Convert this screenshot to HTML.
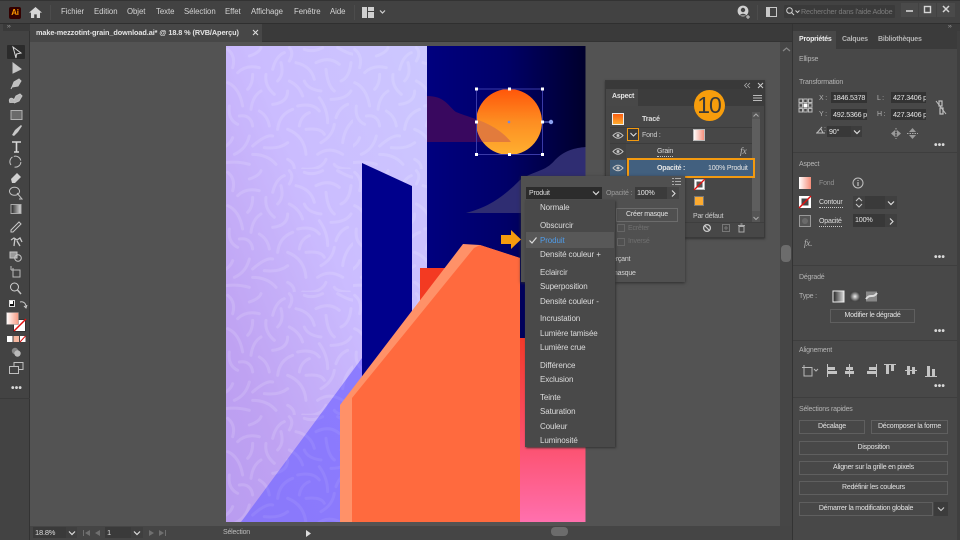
<!DOCTYPE html>
<html lang="fr"><head><meta charset="utf-8"><title>Illustrator</title>
<style>
html,body{margin:0;padding:0;width:960px;height:540px;overflow:hidden;background:#535353}
body{position:relative;font-family:"Liberation Sans",sans-serif;color:#d8d8d8;font-size:7px;letter-spacing:-.2px;filter:blur(.3px)}
.b{position:absolute;box-sizing:border-box}
.t{position:absolute;white-space:nowrap;line-height:10px;transform:translateY(-5px)}
.g{color:#b4b4b4}
.f{position:absolute;box-sizing:border-box;background:#333;color:#e6e6e6;font-size:7.2px;line-height:11px;padding-left:2px;white-space:nowrap;overflow:hidden}
.btn{position:absolute;box-sizing:border-box;border:1px solid #5f5f5f;color:#e2e2e2;text-align:center;font-size:7px;line-height:12px;white-space:nowrap}
.m{font-size:8px;letter-spacing:-.1px;color:#dcdcdc;left:540px}
.menu{position:absolute;white-space:nowrap;font-size:7.8px;letter-spacing:-.05px;color:#d4d4d4;top:7px}
.dots{position:absolute;color:#d8d8d8;font-size:10px;font-weight:bold;letter-spacing:.2px;line-height:6px}
.u{border-bottom:1px dotted #c8c8c8;line-height:9px}
svg{position:absolute;overflow:visible}
</style></head><body>

<!-- top bar -->
<div class="b" style="left:0;top:0;width:960px;height:24px;background:#424242;border-bottom:1px solid #2f2f2f;border-top:1px solid #333"></div>
<div class="b" style="left:9px;top:7px;width:12px;height:12px;background:#330000;border-radius:2px;color:#ff9a00;font-size:8px;font-weight:bold;line-height:12px;text-align:center">Ai</div>
<svg style="left:29px;top:7px" width="13" height="11" viewBox="0 0 13 11"><path d="M6.5 0L13 5.6H11V11H7.8V7.4H5.2V11H2V5.6H0Z" fill="#d5d5d5"/></svg>
<div class="b" style="left:50px;top:5px;width:1px;height:15px;background:#4c4c4c"></div>
<div class="menu" style="left:61px">Fichier</div><div class="menu" style="left:94px">Edition</div><div class="menu" style="left:127px">Objet</div><div class="menu" style="left:156px">Texte</div><div class="menu" style="left:184px">Sélection</div><div class="menu" style="left:225px">Effet</div><div class="menu" style="left:251px">Affichage</div><div class="menu" style="left:294px">Fenêtre</div><div class="menu" style="left:330px">Aide</div>
<div class="b" style="left:354px;top:5px;width:1px;height:15px;background:#4c4c4c"></div>
<svg style="left:362px;top:7px" width="24" height="11" viewBox="0 0 24 11"><path d="M0 0h5v11H0zM6 0h6v4H6zM6 5h6v6H6z" fill="#d0d0d0"/><path d="M18 3.5l2.5 2.5 2.5-2.5" fill="none" stroke="#d0d0d0" stroke-width="1.2"/></svg>
<svg style="left:737px;top:5px" width="14" height="15" viewBox="0 0 14 15"><circle cx="6" cy="6" r="5.4" fill="#d0d0d0"/><circle cx="6" cy="5" r="2.2" fill="#424242"/><path d="M2.8 10.5c.6-2.4 5.8-2.4 6.4 0" fill="#424242"/><path d="M11 10v4M9 12h4" stroke="#d0d0d0" stroke-width="1"/></svg>
<div class="b" style="left:757px;top:5px;width:1px;height:15px;background:#4c4c4c"></div>
<svg style="left:766px;top:7px" width="11" height="10" viewBox="0 0 11 10"><rect x=".5" y=".5" width="10" height="9" fill="none" stroke="#c8c8c8"/><rect x="1" y="1" width="3" height="8" fill="#c8c8c8"/></svg>
<div class="b" style="left:784px;top:5px;width:111px;height:13px;background:#3a3a3a;border-radius:1px"></div>
<svg style="left:786px;top:7px" width="14" height="9" viewBox="0 0 14 9"><circle cx="3.5" cy="3.5" r="2.8" fill="none" stroke="#d0d0d0"/><path d="M5.5 5.5L8 8M9.5 3.5l2 2 2-2" fill="none" stroke="#d0d0d0"/></svg>
<div class="t" style="left:801px;top:11.5px;font-size:7.2px;letter-spacing:-.15px;color:#7c7c7c">Rechercher dans l'aide Adobe</div>
<div class="b" style="left:901px;top:3px;width:17px;height:14px;background:#4a4a4a"></div>
<div class="b" style="left:919px;top:3px;width:17px;height:14px;background:#4a4a4a"></div>
<div class="b" style="left:937px;top:3px;width:18px;height:14px;background:#4a4a4a"></div>
<svg style="left:901px;top:3px" width="54" height="14" viewBox="0 0 54 14"><path d="M5 8h7" stroke="#d5d5d5" stroke-width="1.6"/><rect x="23.5" y="3.5" width="6" height="6" fill="none" stroke="#d5d5d5" stroke-width="1.4"/><path d="M42 3l6 6M48 3l-6 6" stroke="#d5d5d5" stroke-width="1.5"/></svg>

<!-- tab bar -->
<div class="b" style="left:0;top:24px;width:792px;height:18px;background:#3a3a3a;border-bottom:1px solid #333"></div>
<div class="b" style="left:30px;top:24px;width:232px;height:18px;background:#474747"></div>
<div class="t" style="left:36px;top:32.5px;font-size:7.3px;letter-spacing:-.08px;font-weight:bold;color:#e4e4e4">make-mezzotint-grain_download.ai* @ 18.8 % (RVB/Aperçu)</div>
<svg style="left:252px;top:29px" width="7" height="7" viewBox="0 0 7 7"><path d="M1 1l5 5M6 1L1 6" stroke="#dcdcdc" stroke-width="1.1"/></svg>

<!-- artwork -->
<svg style="left:0;top:0" width="960" height="540" viewBox="0 0 960 540">
<defs>
<linearGradient id="lav" x1="1" y1="0" x2="0" y2="1"><stop offset="0" stop-color="#ccc8ff"/><stop offset=".45" stop-color="#cbbcff"/><stop offset=".8" stop-color="#bfa2f2"/><stop offset="1" stop-color="#b99cf0"/></linearGradient>
<linearGradient id="navy" x1="0" x2="1" y1="0" y2="0"><stop offset="0" stop-color="#00007f"/><stop offset=".5" stop-color="#000068"/><stop offset="1" stop-color="#00002c"/></linearGradient>
<linearGradient id="sun" x1="0" x2="0" y1="0" y2="1"><stop offset="0" stop-color="#ff560a"/><stop offset=".5" stop-color="#fd8e22"/><stop offset="1" stop-color="#ffb030"/></linearGradient>
<linearGradient id="pink" x1="0" x2="0" y1="0" y2="1"><stop offset="0" stop-color="#f33a2a"/><stop offset=".55" stop-color="#fc4f6a"/><stop offset="1" stop-color="#ff70ae"/></linearGradient>
<linearGradient id="peri" x1="0" x2="1" y1="1" y2="0"><stop offset="0" stop-color="#8a78fa"/><stop offset="1" stop-color="#8c7cff"/></linearGradient>
<pattern id="curl" patternUnits="userSpaceOnUse" x="226" y="46" width="127" height="123">
<g transform="scale(.3333)" fill="none" stroke="#fff" stroke-opacity=".13" stroke-width="9" stroke-linecap="round">
<path d="M5 110Q40 125 50 180M35 80Q60 55 100 65M5 10Q30 30 20 65M70 30Q100 20 105 5M140 70Q150 30 175 20M165 50Q175 85 155 105M210 50Q255 60 265 100M270 50Q310 30 340 55M300 70Q305 120 325 135M345 105Q370 95 375 50M235 105Q245 130 285 135M120 85Q115 120 145 145M80 85Q80 115 65 130M190 105Q220 120 230 150M140 175Q185 170 185 135M105 135Q80 150 75 190M335 5Q370 25 385 25M235 10Q260 20 290 5M190 5Q205 20 190 45M315 160Q360 160 375 135M215 180Q260 170 280 195M280 155Q305 190 305 230M330 215Q340 185 365 175M155 250Q160 205 200 190M100 195Q125 210 130 240M40 210Q75 205 80 240M10 180Q5 220 35 235M220 240Q225 210 250 200M240 250Q285 245 295 265M285 290Q320 270 325 235M185 250Q235 270 240 325M350 290Q355 250 380 225M80 300Q120 265 140 270M25 325Q60 310 70 270M115 305Q160 310 185 290M275 325Q310 300 350 325M0 300Q15 290 20 275M80 325Q125 325 150 355M0 350Q35 345 70 355M185 340Q205 350 205 369M230 369Q285 375 300 340M325 355Q335 369 370 369"/>
</g></pattern>
<clipPath id="cc"><circle cx="509" cy="122" r="33"/></clipPath>
</defs>
<rect x="226" y="46" width="201" height="476" fill="url(#lav)"/>
<rect x="226" y="46" width="201" height="476" fill="url(#curl)"/>
<rect x="427" y="46" width="158.500" height="476" fill="url(#navy)"/>
<path d="M241 522L362 358V400L340 405V522Z" fill="url(#peri)"/>
<path d="M241 522L362 358V400L340 405V522Z" fill="url(#curl)" opacity=".5"/>
<path d="M362 163L412 186V345L362 405Z" fill="#00008c"/>
<path d="M427 96C445 96 448 106 456 112C470 118 495 122 511 142H427Z" fill="#39085f"/>
<circle cx="509" cy="122" r="33" fill="url(#sun)"/>
<path d="M427 96C445 96 448 106 456 112C470 118 495 122 511 142H427Z" fill="#e27b3c" clip-path="url(#cc)"/>
<path d="M466 213C490 207 505 195 520 180C535 170 545 172 555 160C565 150 575 148 585.500 147V213Z" fill="#2f2d72"/>
<rect x="420" y="268" width="100" height="100" fill="#f33a22"/>
<rect x="520" y="338" width="65.500" height="184" fill="url(#pink)"/>
<path d="M340 405L463 244L480 245L520 258V522H340Z" fill="#ff9168"/>
<path d="M352 398L474 248L480 245L520 258V522H352Z" fill="#ff6a3e"/>
<!-- selection -->
<rect x="476.500" y="89" width="66" height="65.500" fill="none" stroke="#3a3aa8" stroke-width="1"/>
<path d="M542.500 122H551" stroke="#6f88e8"/><circle cx="551" cy="122" r="2.200" fill="#8aa0f0"/><circle cx="509" cy="122" r="1.300" fill="#6f88e8"/>
<g fill="#fff"><rect x="475" y="87.500" width="3" height="3"/><rect x="508" y="87.500" width="3" height="3"/><rect x="541" y="87.500" width="3" height="3"/><rect x="475" y="120.500" width="3" height="3"/><rect x="541" y="120.500" width="3" height="3"/><rect x="475" y="153" width="3" height="3"/><rect x="508" y="153" width="3" height="3"/><rect x="541" y="153" width="3" height="3"/></g>
</svg>

<!-- toolbar -->
<div class="b" style="left:0;top:24px;width:30px;height:516px;background:#434343;border-right:1px solid #333"></div>
<div class="b" style="left:0;top:398px;width:30px;height:1px;background:#3a3a3a"></div>
<div class="b" style="left:3px;top:24px;width:27px;height:7px;background:#3a3a3a"></div>
<div class="t" style="left:7px;top:27px;font-size:6px;color:#aaa">››</div>
<div class="b" style="left:7px;top:45px;width:18px;height:14px;background:#2b2b2b;border-radius:1px"></div>
<svg style="left:0;top:0" width="30" height="400" viewBox="0 0 30 400" fill="none" stroke="#c4c4c4" stroke-width="1">
<path d="M13 47L21 53L16.500 54L16 58Z" stroke="#d8d8d8"/>
<path d="M13 63L21 69L17 71L13 73Z" fill="#c8c8c8"/>
<path d="M12 87L14 82L19 79L21 81L18 86Z" fill="#c0c0c0"/><path d="M12 87L11 89"/>
<path d="M10 103C8 98 12 97 14 100L16 96L20 94L22 96L19 101L14 103" fill="#b8b8b8"/>
<rect x="11" y="110.500" width="11" height="9" fill="#6a6a6a" stroke="#b0b0b0"/>
<path d="M12 135L15 130L21 125L22 126L18 132L14 136Z" fill="#c8c8c8" stroke="none"/>
<path d="M12 142H21M16.500 142V152M14 152H19" stroke="#d8d8d8" stroke-width="1.6"/>
<path d="M11 165A5.500 5.500 0 1 1 14 167" stroke-dasharray="9 1.500"/>
<path d="M11 179L17 173L21 177L15 183H12Z" fill="#d0d0d0" stroke="none"/>
<path d="M10 193A5 4 0 1 1 19 193A5 4 0 0 1 10 193ZM17 193L22 199L19 199" stroke="#c0c0c0"/>
<defs><linearGradient id="tg"><stop offset="0" stop-color="#222"/><stop offset="1" stop-color="#ddd"/></linearGradient></defs>
<rect x="11" y="204.500" width="10" height="9" fill="url(#tg)" stroke="#aaa"/>
<path d="M11 230L19 222L21 224L13 232H11Z" stroke="#c8c8c8"/>
<path d="M11 240L14 238L17 240L20 238L22 242M15 238L14 246M17 241L20 246" stroke="#c8c8c8" stroke-width="1.300"/>
<rect x="10" y="252" width="7" height="6" fill="#999"/><circle cx="18" cy="258" r="3.300" stroke="#c8c8c8"/>
<path d="M11 270H20V277H13V268M11 266V270" stroke="#b8b8b8"/>
<circle cx="14.500" cy="287" r="4" stroke="#d0d0d0"/><path d="M17.500 290L21 294" stroke-width="1.500"/>
</svg>
<div class="b" style="left:9px;top:300px;width:6px;height:7px;background:#111;border:1px solid #ddd"></div>
<div class="b" style="left:10px;top:301px;width:3px;height:3px;background:#fff"></div>
<svg style="left:19px;top:300px" width="9" height="9" viewBox="0 0 9 9"><path d="M1 2C4 1 7 3 7 7M5 6l2 2 1-3" fill="none" stroke="#c8c8c8"/></svg>
<svg style="left:6px;top:312px" width="21" height="21" viewBox="0 0 21 21"><defs><linearGradient id="fg" x1="0" x2="1" y1="0" y2="0"><stop offset="0" stop-color="#fff"/><stop offset="1" stop-color="#f89880"/></linearGradient></defs><rect x="7.500" y="7.500" width="12" height="12" fill="#fff" stroke="#333"/><path d="M8 19L20 7" stroke="#e01010" stroke-width="1.500"/><rect x="0.500" y="0.500" width="12" height="12" fill="url(#fg)" stroke="#888" stroke-width=".5"/></svg>
<svg style="left:7px;top:336px" width="19" height="7" viewBox="0 0 19 7"><rect width="5.500" height="6" fill="#fff"/><rect x="6.500" width="5.500" height="6" fill="#f5b79f"/><rect x="13" width="5.500" height="6" fill="#fff"/><path d="M13 6L18.500 0" stroke="#e01010"/></svg>
<svg style="left:11px;top:347px" width="11" height="11" viewBox="0 0 11 11"><circle cx="4" cy="4" r="3.200" fill="#888"/><circle cx="6.500" cy="6.500" r="3.200" fill="#bbb"/></svg>
<svg style="left:9px;top:362px" width="15" height="13" viewBox="0 0 15 13"><rect x="5" y=".5" width="9" height="7" fill="none" stroke="#c0c0c0"/><rect x=".5" y="4.500" width="9" height="7" fill="#434343" stroke="#c0c0c0"/></svg>
<div class="dots" style="left:11px;top:386px">•••</div>

<!-- scroll/status -->
<div class="b" style="left:780px;top:42px;width:12px;height:484px;background:#464646"></div>
<svg style="left:782px;top:46px" width="9" height="6" viewBox="0 0 9 6"><path d="M1 5l3.500-3L8 5" fill="none" stroke="#888" stroke-width="1.200"/></svg>
<div class="b" style="left:781px;top:245px;width:10px;height:17px;background:#6c6c6c;border-radius:4px"></div>
<div class="b" style="left:30px;top:526px;width:762px;height:14px;background:#454545"></div>
<div class="b" style="left:33px;top:527px;width:33px;height:11px;background:#3a3a3a"></div>
<div class="t" style="left:35px;top:533px;color:#ddd;font-size:7.5px">18.8%</div>
<div class="b" style="left:66px;top:527px;width:11px;height:11px;background:#3f3f3f"></div>
<svg style="left:68px;top:530px" width="8" height="6" viewBox="0 0 8 6"><path d="M1 1.500l3 3 3-3" fill="none" stroke="#ddd" stroke-width="1.200"/></svg>
<svg style="left:82px;top:529px" width="20" height="8" viewBox="0 0 20 8" fill="#6f6f6f"><path d="M1 1h1v6H1zM8 1L3 4l5 3zM18 1L13 4l5 3z"/></svg>
<div class="b" style="left:105px;top:527px;width:26px;height:11px;background:#3a3a3a"></div>
<div class="t" style="left:107px;top:533px;color:#ddd;font-size:7.5px">1</div>
<div class="b" style="left:131px;top:527px;width:12px;height:11px;background:#3f3f3f"></div>
<svg style="left:133px;top:530px" width="8" height="6" viewBox="0 0 8 6"><path d="M1 1.500l3 3 3-3" fill="none" stroke="#ddd" stroke-width="1.200"/></svg>
<svg style="left:148px;top:529px" width="19" height="8" viewBox="0 0 19 8" fill="#6f6f6f"><path d="M1 1l5 3-5 3zM11 1l5 3-5 3zM17 1h1v6h-1z"/></svg>
<div class="t" style="left:223px;top:533px;color:#bbb">Sélection</div>
<svg style="left:306px;top:530px" width="6" height="7" viewBox="0 0 6 7"><path d="M0 0l5 3.500L0 7z" fill="#ddd"/></svg>
<div class="b" style="left:551px;top:527px;width:17px;height:9px;background:#6c6c6c;border-radius:4px"></div>

<!-- right panel -->
<div class="b" style="left:792px;top:24px;width:168px;height:516px;background:#454545;border-left:1px solid #333"></div>
<div class="b" style="left:793px;top:24px;width:167px;height:7px;background:#3b3b3b"></div>
<div class="b" style="left:793px;top:31px;width:164px;height:18px;background:#3b3b3b"></div>
<div class="b" style="left:793px;top:31px;width:43px;height:18px;background:#484848"></div>
<div class="b" style="left:957px;top:31px;width:3px;height:509px;background:#3f3f3f"></div>
<div class="t" style="left:948px;top:27px;font-size:6px;color:#aaa">››</div>
<div class="b" style="left:793px;top:49px;width:164px;height:491px;background:#484848"></div>
<div class="t" style="left:799px;top:39.500px;font-weight:bold;color:#eee">Propriétés</div>
<div class="t g" style="left:842px;top:39.500px;font-weight:bold">Calques</div>
<div class="t g" style="left:878px;top:39.500px;font-weight:bold">Bibliothèques</div>
<div class="t g" style="left:799px;top:60px">Ellipse</div>
<div class="t g" style="left:799px;top:82.500px">Transformation</div>
<svg style="left:798px;top:98px" width="15" height="15" viewBox="0 0 15 15"><g fill="none" stroke="#bbb"><rect x="1" y="1" width="3.500" height="3.500"/><rect x="5.700" y="1" width="3.500" height="3.500"/><rect x="10.500" y="1" width="3.500" height="3.500"/><rect x="1" y="5.700" width="3.500" height="3.500"/><rect x="10.500" y="5.700" width="3.500" height="3.500"/><rect x="1" y="10.500" width="3.500" height="3.500"/><rect x="5.700" y="10.500" width="3.500" height="3.500"/><rect x="10.500" y="10.500" width="3.500" height="3.500"/></g><rect x="5.500" y="5.500" width="4" height="4" fill="#fff"/></svg>
<div class="t g" style="left:819px;top:98.500px">X :</div>
<div class="f" style="left:831px;top:92px;width:36px;height:11px">1846.5378</div>
<div class="t g" style="left:819px;top:115px">Y :</div>
<div class="f" style="left:831px;top:109px;width:36px;height:11px">492.5366 p</div>
<div class="t g" style="left:877px;top:98.500px">L :</div>
<div class="f" style="left:891px;top:92px;width:35px;height:11px">427.3406 p</div>
<div class="t g" style="left:877px;top:115px">H :</div>
<div class="f" style="left:891px;top:109px;width:35px;height:11px">427.3406 p</div>
<svg style="left:935px;top:100px" width="12" height="15" viewBox="0 0 12 15"><path d="M4 1h3v5H4zM5 8h3v6H5z" fill="none" stroke="#c0c0c0" stroke-width="1.200"/><path d="M1 1l10 13" stroke="#c0c0c0"/></svg>
<svg style="left:816px;top:126px" width="10" height="8" viewBox="0 0 10 8"><path d="M0 7H9M1 7L6 1M5 3L7 7" fill="none" stroke="#bbb"/></svg>
<div class="t g" style="left:824px;top:130px">:</div>
<div class="f" style="left:827px;top:126px;width:24px;height:11px;background:#383838">90°</div>
<div class="b" style="left:851px;top:126px;width:11px;height:11px;background:#3c3c3c"></div>
<svg style="left:853px;top:129px" width="8" height="6" viewBox="0 0 8 6"><path d="M1 1.500l3 3 3-3" fill="none" stroke="#ddd" stroke-width="1.200"/></svg>
<svg style="left:891px;top:127px" width="27" height="13" viewBox="0 0 27 13"><path d="M5 1v11" stroke="#aaa" stroke-dasharray="1.500 1"/><path d="M4 3L0 6.500 4 10zM6 3l4 3.500L6 10z" fill="#9a9a9a"/><path d="M16 6.500h11" stroke="#aaa" stroke-dasharray="1.500 1"/><path d="M18 5l3.500-4L25 5zM18 8l3.500 4L25 8z" fill="#9a9a9a"/></svg>
<div class="dots" style="left:934px;top:143px">•••</div>
<div class="b" style="left:793px;top:152px;width:164px;height:1px;background:#3e3e3e"></div>
<div class="t g" style="left:799px;top:164.500px">Aspect</div>
<svg style="left:799px;top:177px" width="12" height="12"><defs><linearGradient id="fg2"><stop offset="0" stop-color="#fff"/><stop offset="1" stop-color="#f58c78"/></linearGradient></defs><rect width="12" height="12" fill="url(#fg2)"/></svg>
<div class="t" style="left:819px;top:184px;color:#8e8e8e">Fond</div>
<svg style="left:852px;top:177px" width="12" height="12" viewBox="0 0 12 12"><circle cx="6" cy="6" r="5" fill="none" stroke="#c0c0c0"/><path d="M6 5v4M6 3v1" stroke="#c0c0c0" stroke-width="1.200"/></svg>
<svg style="left:799px;top:196px" width="12" height="12"><rect width="12" height="12" fill="#fff"/><rect x="2.500" y="2.500" width="7" height="7" fill="#484848"/><path d="M0 12L12 0" stroke="#e01010" stroke-width="1.500"/></svg>
<div class="t u" style="left:819px;top:203px;color:#ddd">Contour</div>
<div class="b" style="left:853px;top:196px;width:12px;height:13px;background:#404040"></div>
<svg style="left:855px;top:197px" width="8" height="11" viewBox="0 0 8 11"><path d="M1 4l3-3 3 3M1 7l3 3 3-3" fill="none" stroke="#c8c8c8"/></svg>
<div class="b" style="left:865px;top:196px;width:20px;height:13px;background:#3a3a3a"></div>
<div class="b" style="left:885px;top:196px;width:12px;height:13px;background:#404040"></div>
<svg style="left:887px;top:200px" width="8" height="6" viewBox="0 0 8 6"><path d="M1 1.500l3 3 3-3" fill="none" stroke="#ddd" stroke-width="1.200"/></svg>
<svg style="left:799px;top:215px" width="12" height="12" viewBox="0 0 12 12"><rect x=".5" y=".5" width="11" height="11" fill="#555" stroke="#999"/><circle cx="6" cy="6" r="3" fill="#6a6a6a"/></svg>
<div class="t u" style="left:819px;top:221.500px;color:#ddd">Opacité</div>
<div class="f" style="left:853px;top:214px;width:32px;height:13px;background:#383838;line-height:12px">100%</div>
<div class="b" style="left:885px;top:214px;width:12px;height:13px;background:#404040"></div>
<svg style="left:889px;top:218px" width="5" height="7" viewBox="0 0 5 7"><path d="M1 .5l3 3-3 3" fill="none" stroke="#ddd" stroke-width="1.100"/></svg>
<div class="t" style="left:804px;top:243px;font-family:'Liberation Serif',serif;font-style:italic;font-size:9px;color:#b8b8b8">fx.</div>
<div class="dots" style="left:934px;top:255px">•••</div>
<div class="b" style="left:793px;top:265px;width:164px;height:1px;background:#3e3e3e"></div>
<div class="t g" style="left:799px;top:277.500px">Dégradé</div>
<div class="t g" style="left:799px;top:297px">Type :</div>
<svg style="left:832px;top:290px" width="46" height="13" viewBox="0 0 46 13"><defs><linearGradient id="gl"><stop offset="0" stop-color="#222"/><stop offset="1" stop-color="#ddd"/></linearGradient><radialGradient id="gr"><stop offset="0" stop-color="#eee"/><stop offset="1" stop-color="#444"/></radialGradient></defs><rect x="1" y="1" width="11" height="11" fill="url(#gl)" stroke="#eee"/><rect x="18" y="1.500" width="10" height="10" fill="url(#gr)"/><rect x="34" y="1.500" width="11" height="10" fill="#888"/><path d="M34 9C38 3 41 9 45 3" stroke="#ddd" stroke-width="2" fill="none"/></svg>
<div class="btn" style="left:830px;top:309px;width:85px;height:14px">Modifier le dégradé</div>
<div class="dots" style="left:934px;top:329px">•••</div>
<div class="b" style="left:793px;top:340px;width:164px;height:1px;background:#3e3e3e"></div>
<div class="t g" style="left:799px;top:350.500px">Alignement</div>
<svg style="left:801px;top:364px" width="145" height="13" viewBox="0 0 145 13"><g fill="#c4c4c4"><path d="M1 3.500H11V12H3V1" fill="none" stroke="#b8b8b8"/><path d="M13 5l2 2 2-2" fill="none" stroke="#b8b8b8"/><path d="M26 0h1v13h-1zM27 3h7v3h-7zM27 7h9v3h-9z"/><path d="M48 0h1v13h-1zM45 3h7v3h-7zM44 7h9v3h-9z"/><path d="M75 0h1v13h-1zM68 3h7v3h-7zM66 7h9v3h-9z"/><path d="M83 0h12v1H83zM85 1h3v9h-3zM90 1h3v6h-3z"/><path d="M104 6h12v1h-12zM106 2h3v9h-3zM111 3h3v7h-3z"/><path d="M124 12h12v1h-12zM126 2h3v10h-3zM131 5h3v7h-3z"/></g></svg>
<div class="dots" style="left:934px;top:384px">•••</div>
<div class="b" style="left:793px;top:397px;width:164px;height:1px;background:#3e3e3e"></div>
<div class="t g" style="left:799px;top:409.500px">Sélections rapides</div>
<div class="btn" style="left:799px;top:420px;width:66px;height:14px">Décalage</div>
<div class="btn" style="left:871px;top:420px;width:77px;height:14px">Décomposer la forme</div>
<div class="btn" style="left:799px;top:441px;width:149px;height:14px">Disposition</div>
<div class="btn" style="left:799px;top:461px;width:149px;height:14px">Aligner sur la grille en pixels</div>
<div class="btn" style="left:799px;top:481px;width:149px;height:14px">Redéfinir les couleurs</div>
<div class="btn" style="left:799px;top:502px;width:134px;height:14px">Démarrer la modification globale</div>
<div class="b" style="left:934px;top:502px;width:14px;height:14px;background:#3c3c3c"></div>
<svg style="left:937px;top:506px" width="8" height="6" viewBox="0 0 8 6"><path d="M1 1.500l3 3 3-3" fill="none" stroke="#ccc" stroke-width="1.100"/></svg>

<!-- Aspect panel -->
<div class="b" style="left:605px;top:80px;width:160px;height:158px;background:#474747;border:1px solid #3a3a3a;box-shadow:0 1px 2px #333"></div>
<div class="b" style="left:606px;top:81px;width:158px;height:8px;background:#393939"></div>
<div class="b" style="left:606px;top:89px;width:158px;height:17px;background:#3c3c3c"></div>
<div class="b" style="left:606px;top:89px;width:32px;height:17px;background:#484848"></div>
<div class="t" style="left:612px;top:97px;font-weight:bold;color:#e4e4e4">Aspect</div>
<svg style="left:744px;top:82px" width="20" height="7" viewBox="0 0 20 7"><path d="M3 1L0.500 3.500 3 6M6 1L3.500 3.500 6 6" fill="none" stroke="#aaa" stroke-width=".8"/><path d="M14 1l5 5M19 1l-5 5" stroke="#ccc" stroke-width="1"/></svg>
<svg style="left:753px;top:95px" width="9" height="6" viewBox="0 0 9 6"><path d="M0 .5h9M0 3h9M0 5.500h9" stroke="#bbb"/></svg>
<div class="b" style="left:752px;top:112px;width:8px;height:110px;background:#555"></div>
<div class="b" style="left:752px;top:119px;width:8px;height:92px;background:#5e5e5e"></div>
<svg style="left:753px;top:113px" width="6" height="108" viewBox="0 0 6 108"><path d="M.5 3.500L3 1l2.500 2.500M.5 104l2.500 2.500 2.500-2.500" fill="none" stroke="#aaa"/></svg>
<div class="b" style="left:610px;top:127px;width:142px;height:1px;background:#3c3c3c"></div>
<div class="b" style="left:610px;top:143px;width:142px;height:1px;background:#3c3c3c"></div>
<div class="b" style="left:610px;top:128px;width:16px;height:15px;background:#434343"></div>
<div class="b" style="left:610px;top:144px;width:16px;height:15px;background:#434343"></div>
<div class="b" style="left:610px;top:160px;width:16px;height:16px;background:#3f5a75"></div>
<svg style="left:612px;top:113px" width="12" height="12"><defs><linearGradient id="tr" x1="0" x2="0" y1="0" y2="1"><stop offset="0" stop-color="#fa5a10"/><stop offset="1" stop-color="#ffb030"/></linearGradient></defs><rect x=".5" y=".5" width="11" height="11" fill="url(#tr)" stroke="#eee"/></svg>
<div class="t" style="left:642px;top:119px;font-weight:bold;color:#ddd;font-size:7.2px">Tracé</div>
<svg style="left:612px;top:0" width="12" height="180" viewBox="0 0 12 180"><g fill="none" stroke="#c4c4c4"><path d="M1 135.500Q6 130 11 135.500Q6 141 1 135.500Z"/><path d="M1 151.500Q6 146 11 151.500Q6 157 1 151.500Z"/><path d="M1 168Q6 162.500 11 168Q6 173.500 1 168Z"/></g><circle cx="6" cy="135.500" r="1.500" fill="#c4c4c4"/><circle cx="6" cy="151.500" r="1.500" fill="#c4c4c4"/><circle cx="6" cy="168" r="1.500" fill="#c4c4c4"/></svg>
<div class="b" style="left:627px;top:128px;width:12px;height:13px;border:1.500px solid #f39a10;background:#3a3a3a"></div>
<svg style="left:630px;top:132px" width="7" height="5" viewBox="0 0 7 5"><path d="M.5 1l3 3 3-3" fill="none" stroke="#ddd" stroke-width="1.100"/></svg>
<div class="t" style="left:642px;top:135.500px;color:#ccc">Fond :</div>
<svg style="left:693px;top:129px" width="12" height="12"><rect x=".5" y=".5" width="11" height="11" fill="url(#fg2)" stroke="#bbb"/></svg>
<div class="t u" style="left:657px;top:151.500px;color:#ddd">Grain</div>
<div class="t" style="left:740px;top:151.500px;font-family:'Liberation Serif',serif;font-style:italic;font-size:9.500px;color:#bbb">fx</div>
<div class="b" style="left:627px;top:158px;width:128px;height:20px;background:#42607f;border:2px solid #f39a10"></div>
<div class="t" style="left:657px;top:168.500px;font-weight:bold;color:#e4e4e4">Opacité :</div>
<div class="t" style="left:708px;top:168.500px;color:#e4e4e4">100% Produit</div>
<svg style="left:694px;top:179px" width="11" height="11"><rect x=".5" y=".5" width="10" height="10" fill="#fff" stroke="#bbb"/><rect x="2.500" y="2.500" width="6" height="6" fill="#555"/><path d="M0 11L11 0" stroke="#e01010" stroke-width="1.300"/></svg>
<div class="b" style="left:694px;top:196px;width:10px;height:10px;background:#fdab30;border:1px solid #777"></div>
<div class="t" style="left:693px;top:217px;color:#ccc">Par défaut</div>
<div class="b" style="left:606px;top:222px;width:158px;height:1px;background:#3e3e3e"></div>
<svg style="left:702px;top:223px" width="46" height="10" viewBox="0 0 46 10"><circle cx="5" cy="5" r="3.400" fill="none" stroke="#ccc" stroke-width="1.300"/><path d="M2.500 2.500l5 5" stroke="#ccc" stroke-width="1.200"/><rect x="20.500" y="1.500" width="7" height="7" fill="none" stroke="#777"/><path d="M24 3v4M22 5h4" stroke="#777"/><path d="M36 2.500h7M37 3.500h5V9h-5zM38.500 1h2" fill="none" stroke="#aaa"/></svg>

<!-- transparency popup -->
<div class="b" style="left:521px;top:176px;width:164px;height:106px;background:#505050;box-shadow:0 1px 3px #2c2c2c"></div>
<svg style="left:672px;top:178px" width="9" height="7" viewBox="0 0 9 7"><path d="M3 .5h6M3 3.500h6M3 6.500h6M0 .5h2M0 3.500h2M0 6.500h2" stroke="#aaa"/></svg>
<div class="b" style="left:526px;top:187px;width:76px;height:12px;background:#2c2c2c"></div>
<div class="t" style="left:529px;top:193.500px;color:#ddd">Produit</div>
<svg style="left:592px;top:190px" width="8" height="6" viewBox="0 0 8 6"><path d="M1 1.500l3 3 3-3" fill="none" stroke="#ddd" stroke-width="1.200"/></svg>
<div class="t" style="left:606px;top:193.500px;color:#9a9a9a">Opacité :</div>
<div class="f" style="left:635px;top:187px;width:32px;height:12px;background:#3b3b3b">100%</div>
<div class="b" style="left:667px;top:187px;width:12px;height:12px;background:#454545"></div>
<svg style="left:671px;top:190px" width="5" height="7" viewBox="0 0 5 7"><path d="M1 .5l3 3-3 3" fill="none" stroke="#ddd" stroke-width="1.100"/></svg>
<div class="btn" style="left:616px;top:208px;width:62px;height:14px;border-color:#6c6c6c">Créer masque</div>
<div class="b" style="left:617px;top:224px;width:8px;height:8px;border:1px solid #666"></div>
<div class="t" style="left:628px;top:229px;color:#6f6f6f">Ecrêter</div>
<div class="b" style="left:617px;top:238px;width:8px;height:8px;border:1px solid #666"></div>
<div class="t" style="left:628px;top:242px;color:#6f6f6f">Inversé</div>
<div class="t" style="left:612px;top:260px;color:#d4d4d4">erçant</div>
<div class="t" style="left:612px;top:273.500px;color:#d4d4d4">masque</div>

<!-- blend menu -->
<div class="b" style="left:525px;top:200px;width:90px;height:247px;background:#494949;box-shadow:1px 1px 2px #333"></div>
<div class="b" style="left:526px;top:232px;width:88px;height:16px;background:#585858"></div>
<svg style="left:529px;top:237px" width="8" height="7" viewBox="0 0 8 7"><path d="M.5 3.500L3 6l4.500-5.500" fill="none" stroke="#ddd" stroke-width="1.200"/></svg>
<div class="t m" style="top:208px">Normale</div>
<div class="t m" style="top:225.500px">Obscurcir</div>
<div class="t m" style="top:240.500px;color:#4f9be8">Produit</div>
<div class="t m" style="top:254.500px">Densité couleur +</div>
<div class="t m" style="top:272.500px">Eclaircir</div>
<div class="t m" style="top:287px">Superposition</div>
<div class="t m" style="top:301.500px">Densité couleur -</div>
<div class="t m" style="top:319px">Incrustation</div>
<div class="t m" style="top:333.500px">Lumière tamisée</div>
<div class="t m" style="top:348px">Lumière crue</div>
<div class="t m" style="top:365.500px">Différence</div>
<div class="t m" style="top:379.500px">Exclusion</div>
<div class="t m" style="top:397.500px">Teinte</div>
<div class="t m" style="top:412px">Saturation</div>
<div class="t m" style="top:426.500px">Couleur</div>
<div class="t m" style="top:440.500px">Luminosité</div>

<!-- arrow + badge -->
<svg style="left:501px;top:230px" width="20" height="19" viewBox="0 0 20 19"><path d="M0 5H10V0L20 9.500 10 19V14H0Z" fill="#f59a0e"/></svg>
<div class="b" style="left:693.500px;top:89.500px;width:31px;height:31px;border-radius:50%;background:#f79d0c"></div>
<div class="b" style="left:693.500px;top:89.500px;width:31px;height:31px;line-height:31px;text-align:center;font-size:23px;color:#3a3a3a;letter-spacing:-1px">10</div>
</body></html>
